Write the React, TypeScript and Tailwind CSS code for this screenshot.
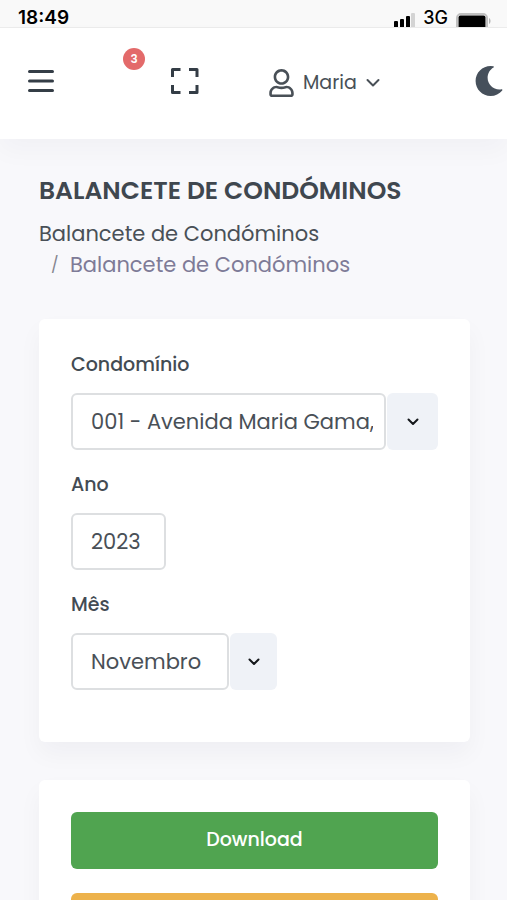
import React from 'react';
import { FaMoon, FaRegUser } from 'react-icons/fa';

function StatusBar() {
  return (
    <div className="flex h-7 items-start justify-between overflow-hidden border-b border-[#ececec] bg-[#f9f9f9] pr-4 pl-[18px] text-black">
      <span className="pt-1 font-['Inter',sans-serif] text-[19px] leading-7 font-semibold">18:49</span>
      <div className="flex items-start gap-2">
        <svg width="22" height="18" viewBox="0 0 22 18" className="mt-3 shrink-0" aria-hidden="true">
          <rect x="1" y="9" width="4" height="9" rx="1" />
          <rect x="7" y="7" width="4" height="11" rx="1" />
          <rect x="13" y="4" width="4" height="14" rx="1" />
          <rect x="18" y="1" width="4" height="17" rx="1" fill="#d4d4d4" />
        </svg>
        <span className="pt-1 font-['Inter',sans-serif] text-lg leading-7 font-medium">3G</span>
        <svg width="35" height="18" viewBox="0 0 35 18" className="mt-3 shrink-0" aria-hidden="true">
          <rect x="1" y="2" width="30" height="20" rx="4" fill="#f9f9f9" stroke="#c0c0c0" strokeWidth="2" />
          <rect x="2.500" y="3.500" width="27" height="18" rx="2" />
          <path d="M33 6c2 1 2 5 0 6z" fill="#b5b5b5" />
        </svg>
      </div>
    </div>
  );
}

function Header() {
  return (
    <header className="flex h-[111px] items-start bg-white pl-[27px] text-[#343d46] shadow-[0_12px_24px_rgba(18,38,63,0.03)]">
      <button type="button" aria-label="Menu" className="mt-[41px]">
        <svg width="28" height="24" viewBox="0 0 28 24" stroke="currentColor" strokeWidth="3" strokeLinecap="round">
          <path d="M2.500 2.500h23M2.500 12h23M2.500 21.500h23" />
        </svg>
      </button>
      <button type="button" aria-label="Notificações" className="mt-5 ml-[68px] flex size-[22px] items-center justify-center rounded-full bg-[#e36a6a] text-xs font-semibold text-white">
        3
      </button>
      <button type="button" aria-label="Ecrã inteiro" className="mt-[39px] ml-[25px]">
        <svg width="30" height="28" viewBox="0 0 30 28" fill="none" stroke="currentColor" strokeWidth="3" strokeLinejoin="round">
          <path d="M2.500 10V2.500H10.500M19 2.500H27V10M2.500 18V25.500H10.500M19 25.500H27V18" />
        </svg>
      </button>
      <button type="button" className="mt-10 ml-[69px] flex h-[30px] items-center gap-[9px] text-[#495057]">
        <FaRegUser className="h-7 w-[25px]" />
        <span className="text-[19px]">Maria</span>
        <svg width="14" height="10" viewBox="0 0 14 10" fill="none" stroke="currentColor" strokeWidth="2" strokeLinecap="round" strokeLinejoin="round">
          <path d="M1.500 2L7 7.500L12.500 2" />
        </svg>
      </button>
      <button type="button" aria-label="Modo escuro" className="mt-[38px] mr-[3px] ml-auto">
        <FaMoon className="size-[30px] text-[#46505b]" />
      </button>
    </header>
  );
}

function Chevron() {
  return (
    <svg width="12" height="8" viewBox="0 0 12 8" fill="none" stroke="#15181c" strokeWidth="2" strokeLinecap="round" strokeLinejoin="round" aria-hidden="true">
      <path d="M1.500 1.500L6 6L10.500 1.500" />
    </svg>
  );
}

const box = 'h-[57px] rounded-md border-2 border-[#dddfe1] bg-white pr-[11px] pl-[18px] text-[21px] text-[#495057] outline-none';
const label = 'block text-[19px] leading-7 font-medium text-[#434b53]';

export default function App() {
  return (
    <div className="h-screen overflow-hidden bg-[#f8f8fb] font-['Poppins','Inter',sans-serif] text-[#495057]">
      <StatusBar />
      <Header />
      <main className="pr-[37px] pl-[39px]">
        <h1 className="pt-9 text-[25px] leading-8 font-semibold text-[#3f474f]">BALANCETE DE CONDÓMINOS</h1>
        <nav aria-label="Navegação" className="mt-[11px] text-[21px] leading-[31px]">
          <ol>
            <li><a href="#balancete">Balancete de Condóminos</a></li>
            <li className="flex text-[#7e7b97]">
              <span className="w-[31px] pl-3 text-base leading-[31px] text-[#85858f]">/</span>
              <span aria-current="page">Balancete de Condóminos</span>
            </li>
          </ol>
        </nav>

        <form className="mt-[39px] rounded-md bg-white px-8 pt-8 pb-[52px] shadow-[0_12px_24px_rgba(18,38,63,0.04)]">
          <div className="flex flex-col gap-[21px]">
            <div>
              <label htmlFor="condominio" className={label}>Condomínio</label>
              <div className="mt-[14px] flex gap-px">
                <select id="condominio" className={`${box} min-w-0 flex-1 appearance-none`}>
                  <option>001 - Avenida Maria Gama, 12</option>
                </select>
                <button type="button" aria-label="Abrir condomínios" className="flex h-[57px] w-[51px] items-center justify-center rounded-md bg-[#eff2f7]">
                  <Chevron />
                </button>
              </div>
            </div>
            <div>
              <label htmlFor="ano" className={label}>Ano</label>
              <input id="ano" type="text" defaultValue="2023" className={`${box} mt-[14px] block w-[95px]`} />
            </div>
            <div>
              <label htmlFor="mes" className={label}>Mês</label>
              <div className="mt-[14px] flex gap-px">
                <select id="mes" className={`${box} w-[158px] appearance-none`}>
                  <option>Novembro</option>
                </select>
                <button type="button" aria-label="Abrir meses" className="flex h-[57px] w-[47px] items-center justify-center rounded-md bg-[#eff2f7]">
                  <Chevron />
                </button>
              </div>
            </div>
          </div>
        </form>

        <section className="mt-[38px] flex flex-col gap-6 rounded-md bg-white p-8 shadow-[0_12px_24px_rgba(18,38,63,0.04)]">
          <button type="button" className="h-[57px] rounded-md bg-[#50a450] text-[19px] font-medium text-white">Download</button>
          <button type="button" aria-label="Enviar" className="h-[57px] rounded-md bg-[#edb24b]" />
        </section>
      </main>
    </div>
  );
}
